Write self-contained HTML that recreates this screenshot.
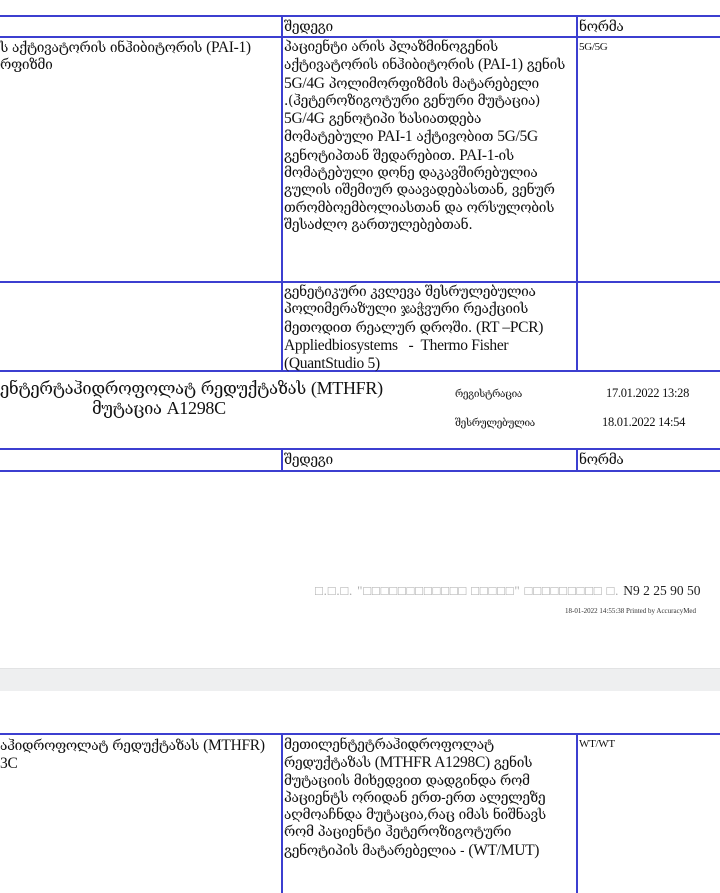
<!DOCTYPE html>
<html><head><meta charset="utf-8"><style>
body{margin:0;width:720px;height:885px;background:#fff;position:relative;overflow:hidden;font-family:"Liberation Serif","DejaVu Serif","DejaVu Sans",serif;color:#111;}
.h{position:absolute;height:2px;background:#3c3fd0;left:0;right:0;}
.v{position:absolute;width:2px;background:#3c3fd0;}
.t{position:absolute;font-size:15px;line-height:17.3px;white-space:nowrap;letter-spacing:-0.3px;}
.g{font-family:"DejaVu Serif","DejaVu Sans",serif;font-size:13.7px;}
.l{font-family:"Liberation Serif",serif;font-size:15.5px;}
</style></head><body>
<div class="h" style="top:15px"></div>
<div class="h" style="top:36px"></div>
<div class="h" style="top:281px"></div>
<div class="h" style="top:370px"></div>
<div class="h" style="top:448px"></div>
<div class="h" style="top:470px"></div>
<div class="v" style="left:281px;top:15px;height:357px"></div>
<div class="v" style="left:576px;top:15px;height:357px"></div>
<div class="v" style="left:281px;top:448px;height:24px"></div>
<div class="v" style="left:576px;top:448px;height:24px"></div>

<div class="t g" style="left:284px;top:19px">შედეგი</div>
<div class="t g" style="left:579px;top:19px">ნორმა</div>
<div class="t g" style="left:0;top:39px">ს აქტივატორის ინჰიბიტორის <span class="l">(PAI-1)</span><br>რფიზმი</div>
<div class="t g" style="left:284px;top:39px">პაციენტი არის პლაზმინოგენის<br>აქტივატორის ინჰიბიტორის <span class="l">(PAI-1)</span> გენის<br><span class="l">5G/4G</span> პოლიმორფიზმის მატარებელი<br>.(ჰეტეროზიგოტური გენური მუტაცია)<br><span class="l">5G/4G</span>  გენოტიპი ხასიათდება<br>მომატებული <span class="l">PAI-1</span> აქტივობით <span class="l">5G/5G</span><br>გენოტიპთან შედარებით. <span class="l">PAI-1</span>-ის<br>მომატებული დონე დაკავშირებულია<br>გულის იშემიურ დაავადებასთან, ვენურ<br>თრომბოემბოლიასთან და ორსულობის<br>შესაძლო გართულებებთან.</div>
<div class="t" style="left:579px;top:39px;font-size:11px">5G/5G</div>

<div class="t g" style="left:284px;top:284px">გენეტიკური კვლევა შესრულებულია<br>პოლიმერაზული ჯაჭვური რეაქციის<br>მეთოდით რეალურ დროში. <span class="l">(RT –PCR)</span><br><span class="l">Appliedbiosystems &nbsp; - &nbsp;Thermo Fisher</span><br><span class="l">(QuantStudio 5)</span></div>

<div class="t g" style="left:0;top:378px;font-size:16.5px;line-height:20px">ენტერტაჰიდროფოლატ რედუქტაზას <span style="font-family:'Liberation Serif';font-size:18px">(MTHFR)</span></div>
<div class="t g" style="left:92px;top:398px;font-size:16.5px;line-height:20px">მუტაცია <span style="font-family:'Liberation Serif';font-size:18px">A1298C</span></div>
<div class="t g" style="left:455px;top:386px;font-size:10px">რეგისტრაცია</div>
<div class="t" style="left:606px;top:385px;font-size:12.5px">17.01.2022 13:28</div>
<div class="t g" style="left:455px;top:415px;font-size:10px">შესრულებულია</div>
<div class="t" style="left:602px;top:414px;font-size:12.5px">18.01.2022 14:54</div>

<div class="t g" style="left:284px;top:452px">შედეგი</div>
<div class="t g" style="left:579px;top:452px">ნორმა</div>

<div class="t" style="left:315px;top:582px;font-size:13px;color:#aaa;letter-spacing:0.8px">□.□.□. "□□□□□□□□□□□□ □□□□□" □□□□□□□□□ □. <span style="color:#222;letter-spacing:0;font-size:13.5px">N9 2 25 90 50</span></div>
<div class="t" style="left:565px;top:603px;font-size:7px;color:#333;letter-spacing:0">18-01-2022 14:55:38 Printed by AccuracyMed</div>

<div style="position:absolute;left:0;right:0;top:668px;height:22px;background:#eeeff0;border-top:1px solid #e2e3e4"></div>

<div class="h" style="top:733px"></div>
<div class="v" style="left:281px;top:733px;height:160px"></div>
<div class="v" style="left:576px;top:733px;height:160px"></div>
<div class="t g" style="left:0;top:737px">აჰიდროფოლატ რედუქტაზას <span class="l">(MTHFR)</span><br><span class="l">3C</span></div>
<div class="t g" style="left:284px;top:737px">მეთილენტეტრაჰიდროფოლატ<br>რედუქტაზას <span class="l">(MTHFR A1298C)</span> გენის<br>მუტაციის მიხედვით დადგინდა რომ<br>პაციენტს ორიდან ერთ-ერთ ალელეზე<br>აღმოაჩნდა მუტაცია,რაც იმას  ნიშნავს<br>რომ  პაციენტი ჰეტეროზიგოტური<br>გენოტიპის მატარებელია -  <span class="l">(WT/MUT)</span></div>
<div class="t" style="left:579px;top:736px;font-size:11px">WT/WT</div>
</body></html>
